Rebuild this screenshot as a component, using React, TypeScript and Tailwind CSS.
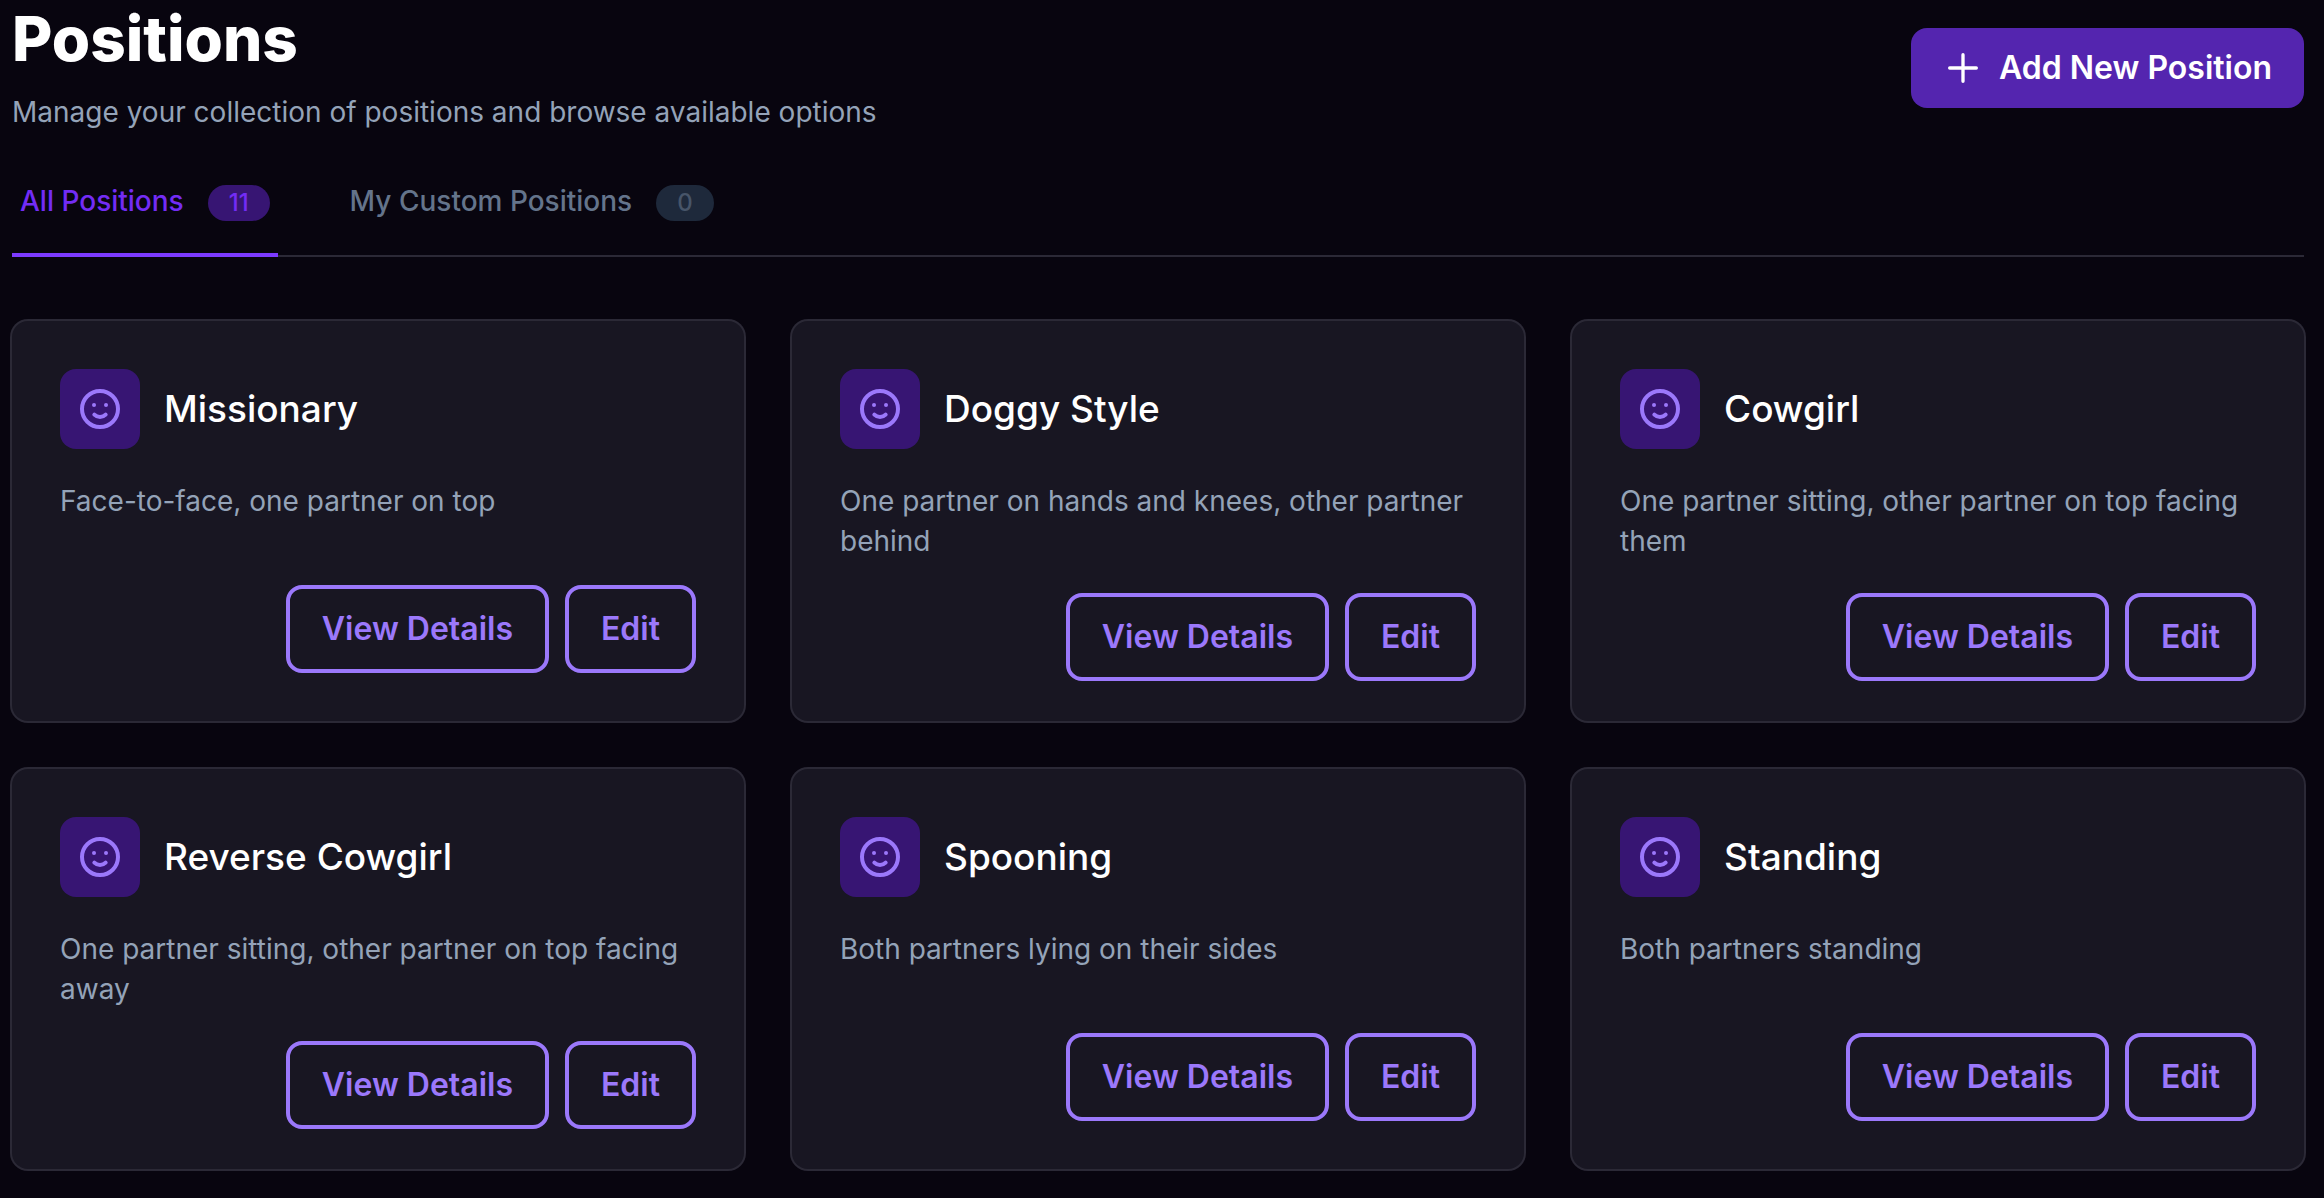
type Position = { name: string; description: string };

const positions: Position[] = [
  { name: "Missionary", description: "Face-to-face, one partner on top" },
  { name: "Doggy Style", description: "One partner on hands and knees, other partner behind" },
  { name: "Cowgirl", description: "One partner sitting, other partner on top facing them" },
  { name: "Reverse Cowgirl", description: "One partner sitting, other partner on top facing away" },
  { name: "Spooning", description: "Both partners lying on their sides" },
  { name: "Standing", description: "Both partners standing" },
];

function PlusIcon() {
  return (
    <svg className="size-10" viewBox="0 0 24 24" fill="none" stroke="currentColor" strokeWidth={2} strokeLinecap="round" strokeLinejoin="round" aria-hidden="true">
      <path d="M12 4v16m8-8H4" />
    </svg>
  );
}

function SmileIcon() {
  return (
    <svg className="size-12" viewBox="0 0 24 24" fill="none" stroke="currentColor" strokeWidth={2} strokeLinecap="round" strokeLinejoin="round" aria-hidden="true">
      <path d="M14.828 14.828a4 4 0 01-5.656 0M9 10h.01M15 10h.01M21 12a9 9 0 11-18 0 9 9 0 0118 0z" />
    </svg>
  );
}

function OutlineButton({ children }: { children: string }) {
  return (
    <button type="button" className="rounded-2xl border-4 border-[#9b78fb] px-8 py-4 text-[32px] leading-[48px] font-semibold text-[#9b78fb]">
      {children}
    </button>
  );
}

function PositionCard({ name, description }: Position) {
  return (
    <article className="flex h-[400px] flex-col rounded-2xl bg-[#181622] p-12 ring-2 ring-[#2b2936]">
      <div className="flex items-center gap-6">
        <div className="flex size-20 shrink-0 items-center justify-center rounded-2xl bg-[#371573] text-[#9b78fb]">
          <SmileIcon />
        </div>
        <h2 className="text-[37px] leading-[56px] font-medium text-white">{name}</h2>
      </div>
      <p className="mt-8 text-[28px] leading-10 text-[#94a3b8]">{description}</p>
      <div className="mt-auto pt-8">
        <div className="flex justify-end gap-4">
          <OutlineButton>View Details</OutlineButton>
          <OutlineButton>Edit</OutlineButton>
        </div>
      </div>
    </article>
  );
}

export default function App() {
  return (
    <main className="min-h-screen bg-[#08050f] pt-1 pr-5 pb-6 pl-3 font-['Inter',sans-serif]">
      <header className="flex items-center justify-between">
        <div>
          <h1 className="text-[62px] leading-[70px] font-extrabold text-white">Positions</h1>
          <p className="mt-[18px] text-[28px] leading-10 text-[#94a3b8]">Manage your collection of positions and browse available options</p>
        </div>
        <button type="button" className="flex items-center gap-4 rounded-2xl bg-[#5425af] px-8 py-4 text-[32px] leading-[48px] font-semibold text-white">
          <PlusIcon />
          Add New Position
        </button>
      </header>

      <nav className="mt-[49px] flex gap-16 border-b-2 border-[#2b2936] text-[28px] leading-10 font-medium" aria-label="Position lists">
        <button type="button" aria-current="page" className="-mb-0.5 flex items-baseline gap-6 border-b-4 border-[#7c3aff] px-2 pb-8 text-[#732cf5]">
          All Positions
          <span className="rounded-full bg-[#371573] px-[21px] py-0.5 text-2xl">11</span>
        </button>
        <button type="button" className="-mb-0.5 flex items-baseline gap-6 border-b-4 border-transparent px-2 pb-8 text-[#64748b]">
          My Custom Positions
          <span className="rounded-full bg-[#1e293b] px-[21px] py-0.5 text-2xl text-[#475569]">0</span>
        </button>
      </nav>

      <section className="mt-16 grid grid-cols-3 gap-12" aria-label="All positions">
        {positions.map((position) => (
          <PositionCard key={position.name} {...position} />
        ))}
      </section>
    </main>
  );
}
